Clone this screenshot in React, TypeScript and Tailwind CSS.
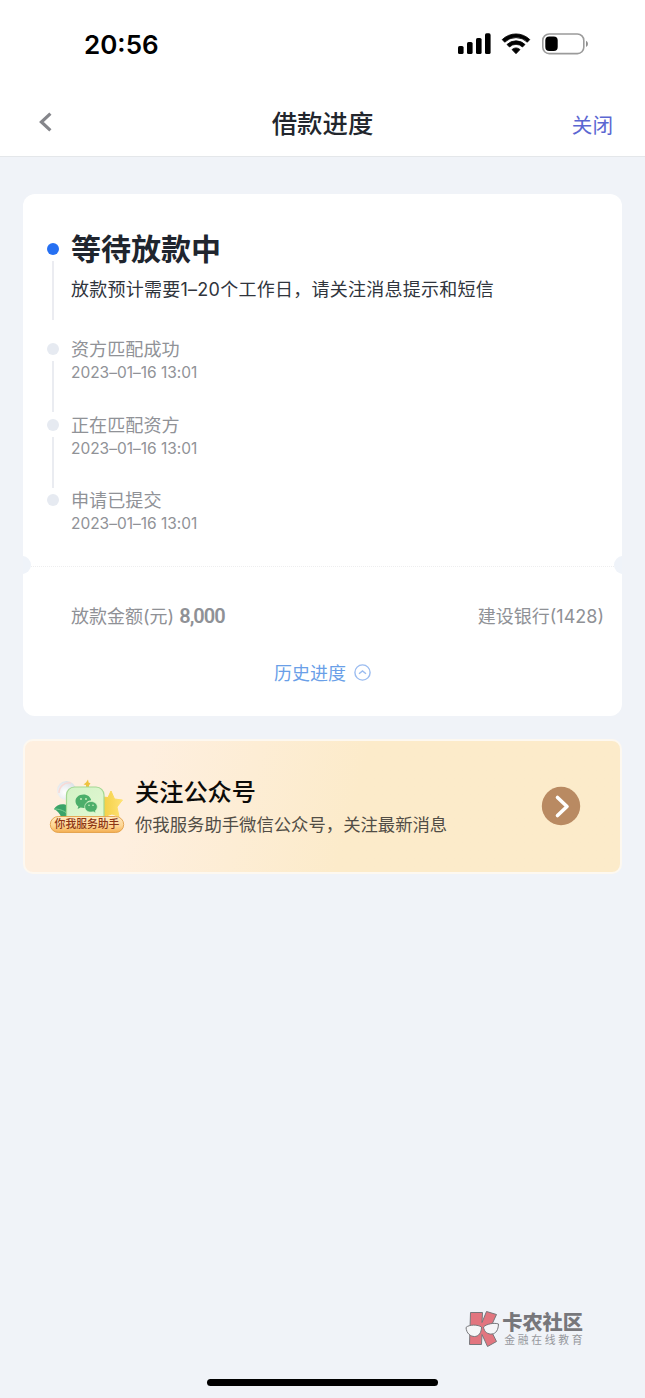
const steps = [
  { title: '资方匹配成功', time: '2023–01–16 13:01' },
  { title: '正在匹配资方', time: '2023–01–16 13:01' },
  { title: '申请已提交', time: '2023–01–16 13:01' },
]

function StatusBar() {
  return (
    <div className="flex h-[88px] items-center justify-between pl-[84px] pr-[56px]">
      <span className="pt-px font-['Inter','Noto_Sans_CJK_SC',sans-serif] text-[26px] font-semibold leading-none text-black">
        20:56
      </span>
      <svg width="132" height="24" viewBox="0 0 132 24">
        <rect x="1" y="14" width="5.6" height="8" rx="1.6" />
        <rect x="10" y="10" width="5.6" height="12" rx="1.6" />
        <rect x="19" y="6" width="5.6" height="16" rx="1.6" />
        <rect x="28" y="1.3" width="5.6" height="20.7" rx="1.6" />
        <path d="M45.2 7.6l2.5 2.6a16.2 16.2 0 0 1 22.6 0l2.5-2.6a19.6 19.6 0 0 0-27.6 0z" strokeWidth="0.8" stroke="#000" strokeLinejoin="round" />
        <path d="M50 12.5l2.5 2.5a9.3 9.3 0 0 1 13 0l2.5-2.5a12.8 12.8 0 0 0-18 0z" strokeWidth="0.8" stroke="#000" strokeLinejoin="round" />
        <path d="M55 17.6l4 4.1 4-4.1a5.6 5.6 0 0 0-8 0z" strokeWidth="0.8" stroke="#000" strokeLinejoin="round" />
        <rect x="85.8" y="2" width="41" height="19.6" rx="6.4" fill="none" stroke="#9b9b9b" strokeWidth="1.6" />
        <rect x="88.3" y="4.5" width="12.4" height="14.6" rx="4" />
        <path d="M129 8.8v6.2a3.4 3.4 0 0 0 0-6.2z" fill="#8f8f8f" />
      </svg>
    </div>
  )
}

function NavBar() {
  return (
    <div className="grid h-[69px] grid-cols-3 items-center border-b border-[#e4e7ea] px-8">
      <svg className="-mt-px ml-1.5" width="15" height="20" viewBox="0 0 15 20" fill="none" stroke="#85868b" strokeWidth="3.2">
        <path d="M12.4 1.6L3.4 10l9 8.4" />
      </svg>
      <h1 className="pt-px text-center text-[25.4px] font-medium leading-none text-[#22262d]">借款进度</h1>
      <button className="mt-1 justify-self-end text-[20.6px] leading-none text-[#5b67d2]">关闭</button>
    </div>
  )
}

function MascotIcon() {
  return (
    <svg className="mt-px" width="76" height="56" viewBox="0 0 76 56">
      <defs>
        <linearGradient id="plate" x1="0" y1="0" x2="0" y2="1">
          <stop offset="0" stopColor="#ffe9c0" />
          <stop offset="0.6" stopColor="#fdd592" />
          <stop offset="1" stopColor="#f3ad4f" />
        </linearGradient>
        <linearGradient id="card" x1="0" y1="0" x2="1" y2="1">
          <stop offset="0" stopColor="#d3f2c6" />
          <stop offset="1" stopColor="#e2f8d2" />
        </linearGradient>
        <linearGradient id="star" x1="0" y1="0" x2="1" y2="0">
          <stop offset="0" stopColor="#f3cf45" />
          <stop offset="1" stopColor="#ffe274" />
        </linearGradient>
        <radialGradient id="ball" cx="0.4" cy="0.6" r="0.6">
          <stop offset="0" stopColor="#ffffff" />
          <stop offset="1" stopColor="#dde3e8" />
        </radialGradient>
      </defs>
      <circle cx="17.5" cy="11.5" r="9.5" fill="url(#ball)" />
      <path d="M10 14c0-6 5-11 12-10" fill="none" stroke="#f8d9d5" strokeWidth="1.5" />
      <path d="M5 30c3-5 9-6 15-3v11H12c-1-3-3-6-7-8z" fill="#3ba368" />
      <path d="M5 30c5 0 9 1 14 5" fill="none" stroke="#77cf92" />
      <path d="M39 .5l.6 3 1.9.8-1.5 2.2v4h-3V6l-2.500-.6 2.500-1.900z" fill="#eec23e" />
      <path d="M62 12l3.500 8 8 1-5.500 7 2 9.500-7-2.500-9 3V18l5 .5z" fill="url(#star)" stroke="url(#star)" strokeLinejoin="round" />
      <path d="M17.500 39V16a8 8 0 0 1 8-8h21.500a8 8 0 0 1 8 8v23z" fill="url(#card)" stroke="#a3d893" strokeWidth="1.2" />
      <path d="M34.500 15.500c-4.600 0-8 2.900-8 6.700 0 2.100 1.100 3.900 2.900 5.200l-.8 2.600 3-1.500c1.200.4 2.700.5 4.200.4 0-5.400 3.600-7.500 6.400-7.700-.7-3.300-3.700-5.700-7.700-5.700z" fill="#4cae6a" />
      <path d="M42 22.500c-3.600 0-6.300 2.400-6.300 5.300s2.700 5.300 6.300 5.300c.8 0 1.600-.1 2.300-.3l2.500 1.300-.6-2.200c1.300-1 2.100-2.400 2.100-4.100 0-2.900-2.700-5.300-6.300-5.300z" fill="#4cae6a" stroke="#d8f4c9" strokeWidth="0.7" />
      <g fill="#d4f2c4">
        <circle cx="32" cy="20" r="0.9" />
        <circle cx="37" cy="20" r="0.9" />
        <circle cx="40" cy="26.3" r="0.8" />
        <circle cx="44" cy="26.3" r="0.8" />
      </g>
      <rect x="1.3" y="37.5" width="73.4" height="16" rx="8" fill="url(#plate)" stroke="#e2a04a" strokeWidth="0.9" />
      <text x="38" y="49.4" textAnchor="middle" fontSize="10.8" fontWeight="500" fill="#8c3414">
        你我服务助手
      </text>
    </svg>
  )
}

function StatusCard() {
  return (
    <section className="mx-[23px] mt-[36.5px] h-[522.5px] overflow-hidden rounded-[12px] bg-white">
      <div className="h-[362.5px] pl-6 pt-[45.5px]">
        <div className="flex h-[100px] gap-3">
          <div className="flex w-3 flex-col items-center pt-1">
            <span className="size-3 rounded-full bg-[#2670f2]" />
            <span className="mt-1.5 h-[59px] w-0.5 bg-[#ebecf1]" />
          </div>
          <div>
            <h2 className="-mt-0.5 text-[30px] font-bold leading-5 text-[#20252e]">等待放款中</h2>
            <p className="mt-[23px] font-['Inter','Noto_Sans_CJK_SC',sans-serif] text-[18px] leading-5 tracking-[0.25px] text-[#30353d]">
              放款预计需要1–20个工作日，请关注消息提示和短信
            </p>
          </div>
        </div>
        {steps.map((step, i) => (
          <div key={step.title} className="flex h-[75.5px] gap-3">
            <div className="flex w-3 flex-col items-center pt-1">
              <span className="size-3 rounded-full bg-[#e6eaf1]" />
              {i < steps.length - 1 && <span className="mt-1.5 h-[51px] w-0.5 bg-[#eaecf1]" />}
            </div>
            <div className="text-[#909297]">
              <p className="-mt-px text-[18.1px] leading-5">{step.title}</p>
              <p className="mt-[5px] font-['Inter',sans-serif] text-[15.5px] leading-5 tracking-[-0.02px]">{step.time}</p>
            </div>
          </div>
        ))}
      </div>
      <div className="-mx-[10px] flex h-[18px] items-center justify-between">
        <span className="size-[18px] rounded-full bg-[#eff3f9]" />
        <span className="mt-[3px] flex-1 border-t border-dotted border-[#eeeeef]" />
        <span className="size-[18px] rounded-full bg-[#eff3f9]" />
      </div>
      <div className="mt-[30px] flex items-center justify-between pl-12 pr-[18px] font-['Inter','Noto_Sans_CJK_SC',sans-serif] text-[18px] leading-6 text-[#8f9196]">
        <p>
          放款金额(元) <b className="font-['Roboto',sans-serif] text-[20px] font-semibold tracking-[-1px]">8,000</b>
        </p>
        <p>建设银行(1428)</p>
      </div>
      <div className="mt-[31px] flex items-center justify-center gap-2 text-[18px] leading-6 text-[#6a9fe8]">
        历史进度
        <svg width="17" height="17" viewBox="0 0 17 17" fill="none" stroke="#9bbcf0" strokeWidth="1.4">
          <circle cx="8.5" cy="8.5" r="7.6" />
          <path d="M5 9.8l3.500-2.900L12 9.800" />
        </svg>
      </div>
    </section>
  )
}

function FollowBanner() {
  return (
    <section className="mx-[23px] mt-[23px] flex h-[135px] items-center rounded-[10px] border-2 border-[#fdf8f0] bg-linear-105 from-[#feefdf] from-20% to-[#fcebca] to-55% pl-6 pr-[39px]">
      <MascotIcon />
      <div className="ml-[10px] flex-1 pt-0.5">
        <h3 className="text-[24.2px] font-medium leading-8 text-[#0c0b09]">关注公众号</h3>
        <p className="pt-px text-[17.35px] leading-8 text-[#514d46]">你我服务助手微信公众号，关注最新消息</p>
      </div>
      <svg className="-mt-px" width="40" height="40" viewBox="0 0 40 40" fill="none">
        <circle cx="20" cy="20" r="19.2" fill="#b98a62" />
        <path d="M16.500 11.500l9.500 9-9.500 9" stroke="#fff" strokeWidth="3.6" strokeLinecap="round" strokeLinejoin="round" />
      </svg>
    </section>
  )
}

function CommunityMark() {
  return (
    <div className="mr-[62px] flex h-10 items-center justify-end gap-[2px]">
      <svg width="35" height="38" viewBox="0 0 35 38" stroke="#77777b" strokeWidth="1">
        <path d="M5.500 2.500h12l-.5 10 4.500-11 10 3-6.500 14 6.500 13-9 5-5.500-12-.5 10h-12z" fill="#e2757f" />
        <path d="M1 17.500c3-3.200 12-3 15.500-.5 0 6-3 9.500-7 9.500S1.500 23.500 1 17.500z" fill="#f5f6f8" />
        <path d="M18.500 17c3-3.200 11-4.500 15-3-.2 6-2.500 9.500-6.500 10-4 .5-8-2-8.500-7z" fill="#f5f6f8" />
      </svg>
      <div className="text-[#77777b]">
        <p className="h-[22px] text-[20.2px] font-black leading-[23px]">卡农社区</p>
        <p className="-mr-[3px] h-4 pl-0.5 text-[10.8px] leading-[15px] tracking-[2.7px] text-[#96989d]">金融在线教育</p>
      </div>
    </div>
  )
}

export default function App() {
  return (
    <div className="flex h-[1398px] w-[645px] flex-col bg-[#f0f3f8] font-['Noto_Sans_CJK_SC',sans-serif]">
      <header className="bg-white">
        <StatusBar />
        <NavBar />
      </header>
      <main className="flex-1">
        <StatusCard />
        <FollowBanner />
      </main>
      <CommunityMark />
      <div className="mx-auto mb-[12px] mt-[30px] h-[7px] w-[231px] rounded-full bg-black" />
    </div>
  )
}
